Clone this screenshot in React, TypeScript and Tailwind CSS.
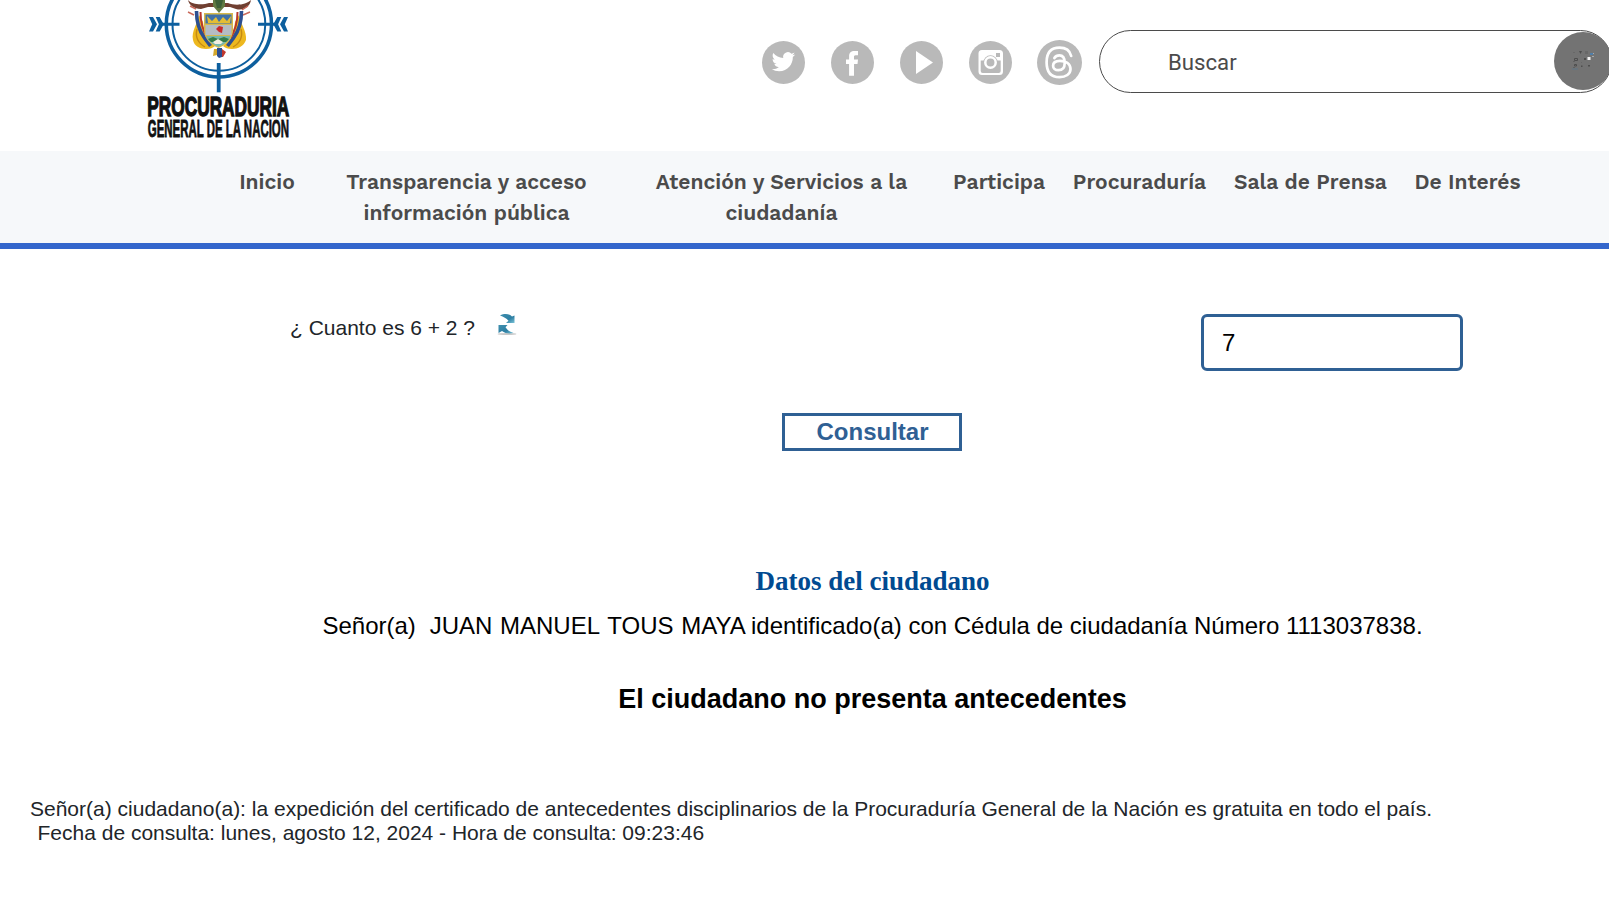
import React from "react";

function Logo() {
  return (
    <svg width="160" height="151" viewBox="138 0 160 151" className="block overflow-visible" aria-label="Procuraduría General de la Nación">
      <g fill="none" stroke="#0d5f9e">
        <circle cx="218.9" cy="24.300" r="52.600" strokeWidth="3.500" />
        <circle cx="218.9" cy="24.300" r="46.400" strokeWidth="2" />
        <path d="M218.700 63v29.300" strokeWidth="3.800" />
        <path d="M162 24.200h17.500M258 24.200h18" strokeWidth="3" />
      </g>
      <g fill="#0d5f9e">
        <path d="M149 17h4l4 7.200-4 7.200h-4l3.200-7.200zM155.700 17h4l4 7.200-4 7.200h-4l3.200-7.200z" />
        <path d="M288 17h-4l-4 7.200 4 7.200h4l-3.200-7.200zM281.300 17h-4l-4 7.200 4 7.200h4l-3.200-7.200z" />
      </g>
      <path d="M188 0c4 5 15 5 21 3h19c7 3 18 2 23-3-1 7-8 11-15 9l-6-2h-22l-7 2c-7 0-12-4-13-9z" fill="#703f31" />
      <path d="M188 12l6 3M190 6l6 3M250 12l-7 3M248 6l-6 4" stroke="#c96a5c" strokeWidth="1.500" />
      <path d="M199 15c-1 8-8 16-6 25 1 6 7 9 13 9 4 0 7-1 9-3-6-5-11-13-12-24zM239 15c1 8 8 16 7 25-2 6-8 9-14 9-4 0-7-1-9-3 6-5 11-13 12-24z" fill="#edb81f" />
      <path d="M197 29c-2 8 1 14 8 18M241 29c2 8-1 14-8 18" fill="none" stroke="#c58a13" strokeWidth="1.400" />
      <path d="M196.500 11c0 9 2 19 8 27l6 8M241.500 11c0 9-2 19-8 27l-6 8" fill="none" stroke="#2c4f91" strokeWidth="3.600" />
      <path d="M200.500 12c0 10 2 18 7 26M237.500 12c0 10-2 18-7 26" fill="none" stroke="#b8382c" strokeWidth="2" />
      <path d="M204 13h29v17c0 9-7 15-14.500 18C211 45 204 39 204 30z" fill="#d7b94c" />
      <path d="M205.500 14.500h26v9h-26z" fill="#3f70a7" />
      <path d="M207 16l5 5 4-4 3 5 4-5 4 4 4-5-1 7h-22z" fill="#e4bd35" />
      <path d="M205.500 25h26v10h-26z" fill="#b5bcc4" />
      <path d="M219 26l4 1-1 6-3-1-3-3z" fill="#c8282c" />
      <path d="M206.500 36h24c-1 5-6 8-12 11-6-3-11-6-12-11z" fill="#76b8ad" />
      <path d="M208 39l5-2 5 2 6-2 5 2-3 3h-15z" fill="#367c48" />
      <path d="M213 42l5-3 5 3-2 2h-6z" fill="#f1eee0" />
      <path d="M213 0h12v6l-6 7-6-7z" fill="#617a43" />
      <path d="M215 0h8l-2 8h-4z" fill="#3d6038" />
      <path d="M217 48h5v9l-3 1-2-2z" fill="#2b4e92" />
      <path d="M214 49h3v6l-4 1z" fill="#d4a72c" />
      <path d="M222 49l4 3-3 5h-1z" fill="#c0372e" />
      <text transform="translate(147.300 116.400) scale(.606 1)" fontSize="28.500" className="fill-[#111] stroke-[#111] font-['Liberation_Sans',sans-serif] font-bold" strokeWidth="1.400">PROCURADURIA</text>
      <text transform="translate(147.800 137.400) scale(.494 1)" fontSize="23.200" className="fill-[#111] stroke-[#111] font-['Liberation_Sans',sans-serif] font-bold" strokeWidth=".8">GENERAL DE LA NACION</text>
    </svg>
  );
}

function Social({ label, children }: { label: string; children: React.ReactNode }) {
  return (
    <svg width="43" height="43" viewBox="0 0 43 43" aria-label={label} className="block shrink-0">
      <circle cx="21.500" cy="21.500" r="21.500" fill="#b9b9b9" />
      {children}
    </svg>
  );
}

function SocialLinks() {
  return (
    <div className="mt-[41px] flex h-[43px] items-center gap-[26px]">
      <Social label="Twitter">
        <path transform="translate(9.700 9) scale(.98)" fill="#fff" d="M23.953 4.570a10 10 0 01-2.825.775 4.958 4.958 0 002.163-2.723c-.951.555-2.005.959-3.127 1.184a4.920 4.920 0 00-8.384 4.482C7.690 8.095 4.067 6.130 1.640 3.162a4.822 4.822 0 00-.666 2.475c0 1.710.87 3.213 2.188 4.096a4.904 4.904 0 01-2.228-.616v.06a4.923 4.923 0 003.946 4.827 4.996 4.996 0 01-2.212.085 4.936 4.936 0 004.604 3.417 9.867 9.867 0 01-6.102 2.105c-.39 0-.779-.023-1.170-.067a13.995 13.995 0 007.557 2.209c9.053 0 13.998-7.496 13.998-13.985 0-.21 0-.42-.015-.63A9.935 9.935 0 0024 4.590z" />
      </Social>
      <Social label="Facebook">
        <path fill="#fff" d="M27 10v4.200h-2.300c-1.500 0-1.700.7-1.700 1.800v2.600h4l-.5 4.400H23v11.700h-4.900V23h-3.100v-4.400h3.100v-3.300c0-3.500 2-5.300 5.400-5.300z" />
      </Social>
      <Social label="YouTube">
        <path fill="#fff" d="M16 10l17 11.500L16 33z" />
      </Social>
      <Social label="Instagram">
        <path fillRule="evenodd" fill="#fff" d="M13 9h17.500a3.500 3.500 0 013.500 3.500v18a3.500 3.500 0 01-3.500 3.500H13a3.500 3.500 0 01-3.500-3.500v-18A3.500 3.500 0 0113 9zM11.700 19.500V30a2 2 0 002 2h16a2 2 0 002-2V19.500z" />
        <circle cx="21.500" cy="21.500" r="7.200" fill="#b9b9b9" />
        <circle cx="21.500" cy="21.500" r="5.200" fill="none" stroke="#fff" strokeWidth="2.500" />
        <rect x="27" y="12" width="4" height="4" fill="#b9b9b9" />
      </Social>
      <svg width="45" height="45" viewBox="0 0 45 45" aria-label="Threads" className="-ml-px block shrink-0">
        <circle cx="22.500" cy="22.500" r="22.500" fill="#b9b9b9" />
        <path d="M34.200 16C32.800 10.300 28.500 7.700 22.500 7.700c-8.800 0-12.900 5.300-12.900 14.500 0 9.600 4.100 15 12.900 15 6.300 0 11-3.200 11-8.100 0-5.800-5-8.300-10.600-8.300-4.400 0-6.800 2.100-6.800 4.900 0 2.600 2 4.500 5.300 4.500 4 0 6.300-2.400 6.300-7.300 0-5-1.500-7.500-5.300-7.500-2.300 0-3.900.8-5 2.600" fill="none" stroke="#fff" strokeWidth="2.700" strokeLinecap="round" />
      </svg>
    </div>
  );
}

function SearchBox() {
  return (
    <div className="mt-[30px] flex h-[63px] w-[513px] shrink-0 items-start justify-between rounded-full border border-[#4b4b4b] bg-white pt-px pl-[68px]">
      <span className="mt-[15px] font-['Roboto',sans-serif] text-[22.2px] leading-[30px] text-[#4b4b4b]">Buscar</span>
      <button className="-mr-px flex size-[58px] items-center justify-center rounded-full bg-[#737373]" aria-label="Buscar">
        <svg width="25" height="22" viewBox="0 0 25 22">
          <g fill="#4e4e4e">
            <path d="M8 1h3l-1.500 3z" />
            <path d="M3.500 8.500h3v2h-3zM3.500 14.500h2v1.500h-2z" fill="none" stroke="#4e4e4e" />
            <path d="M2.500 11h1v1h-1zM2.500 17h1v1h-1zM13 8h2v2h-2zM10 15.500h1.500v1.500H10zM17 15h2v1.500h-2z" />
            <path d="M2 2h2v1H2zM14 1h3v3h-3zM10 12h1v1h-1z" opacity=".3" />
          </g>
          <path d="M19 3h3v2h-3z" fill="#4f7ea8" />
          <path d="M1 18.500h6v1H1z" fill="#5f7689" />
          <path d="M16.500 7h3v3h-3z" fill="#f4f4f4" />
          <path d="M21 6h2v1h-2zM22 3h1v1h-1z" fill="#aaa" />
        </svg>
      </button>
    </div>
  );
}

const menu = [
  { lines: ["Inicio"], box: "ml-[239px] w-[56px]" },
  { lines: ["Transparencia y acceso", "información pública"], box: "ml-[51px] w-[241px]" },
  { lines: ["Atención y Servicios a la", "ciudadanía"], box: "ml-[68px] w-[253px]" },
  { lines: ["Participa"], box: "ml-[44px] w-[94px]" },
  { lines: ["Procuraduría"], box: "ml-[27px] w-[133px]" },
  { lines: ["Sala de Prensa"], box: "ml-[28px] w-[153px]" },
  { lines: ["De Interés"], box: "ml-[27px] w-[107px]" },
];

function Nav() {
  return (
    <nav className="flex h-[98px] items-start border-b-[6px] border-[#3366cc] bg-[#f6f8fa] pt-[15px] font-['Work_Sans','Inter',sans-serif] text-[21px] leading-[31px] font-semibold text-[#4b4b4b]">
      {menu.map((item) => (
        <a key={item.lines[0]} className={`flex shrink-0 flex-col items-center whitespace-nowrap ${item.box}`}>
          {item.lines.map((line) => (
            <span key={line}>{line}</span>
          ))}
        </a>
      ))}
    </nav>
  );
}

function RefreshIcon() {
  return (
    <svg width="20" height="22" viewBox="0 0 20 22" className="mt-[-2px] ml-[22px] block">
      <defs>
        <linearGradient id="arrow" x1="0" y1="0" x2="1" y2="1">
          <stop offset="0" stopColor="#3f8fae" />
          <stop offset=".6" stopColor="#2e7fa3" />
          <stop offset="1" stopColor="#7cc4d8" />
        </linearGradient>
      </defs>
      <ellipse cx="10" cy="20" rx="9.500" ry="1" fill="#c9c9c9" />
      <path d="M3 1.500c5-2.500 9.500-1.500 12 1L17.500 1.500V9H9L11.500 6.800C9.500 4 6.500 3 3 1.500z" fill="url(#arrow)" />
      <path d="M1.500 11H10.500L8.500 13.200c2 3 4.500 4.800 8 5.800-4 1-8.500.5-11.500-2L1.500 19z" fill="url(#arrow)" />
    </svg>
  );
}

export default function App() {
  return (
    <div className="h-[905px] w-full overflow-hidden bg-white font-['Liberation_Sans',Arial,sans-serif]">
      <header className="flex h-[151px] items-start">
        <div className="ml-[138px] w-[624px] shrink-0">
          <Logo />
        </div>
        <SocialLinks />
        <div className="ml-[17px] w-[510px] overflow-hidden">
          <SearchBox />
        </div>
      </header>
      <Nav />
      <main className="text-black">
        <div className="flex items-start justify-between pt-[65px] pr-[146px] pl-[290px]">
          <div className="flex pt-[2px] text-[21px] leading-6 text-[#212529]">
            <span>¿ Cuanto es 6 + 2 ?</span>
            <RefreshIcon />
          </div>
          <input
            defaultValue="7"
            className="h-[57px] w-[262px] rounded-[6px] border-[3px] border-[#2f6094] bg-white px-[18px] text-[24px] text-black outline-none"
          />
        </div>
        <section className="flex flex-col items-center pl-[135px]">
          <button className="mt-[42px] h-[38px] w-[180px] border-[3px] border-[#2f6094] bg-white pl-px text-[24px] leading-[32px] font-bold text-[#2f6094]">
            Consultar
          </button>
          <h2 className="mt-[114px] pl-px font-['Liberation_Serif',serif] text-[27px] leading-8 font-bold text-[#004a91]">Datos del ciudadano</h2>
          <p className="mt-[15px] flex pl-px text-[24px] leading-7 whitespace-pre">
            <span className="mr-[0.5px]">{"Señor(a)  "}</span>
            <span>{"JUAN "}</span>
            <span className="ml-px">{"MANUEL "}</span>
            <span className="ml-[1.5px]">{"TOUS "}</span>
            <span className="ml-px">MAYA identificado(a) con Cédula de ciudadanía Número 1113037838.</span>
          </p>
          <h2 className="mt-[43px] pl-px text-[27px] leading-8 font-bold">El ciudadano no presenta antecedentes</h2>
        </section>
        <footer className="mt-[82px] pl-[30px] text-[21px] leading-6 whitespace-nowrap text-[#212529]">
          <p>Señor(a) ciudadano(a): la expedición del certificado de antecedentes disciplinarios de la Procuraduría General de la Nación es gratuita en todo el país.</p>
          <p className="pl-[7.5px]">Fecha de consulta: lunes, agosto 12, 2024 - Hora de consulta: 09:23:46</p>
        </footer>
      </main>
    </div>
  );
}
